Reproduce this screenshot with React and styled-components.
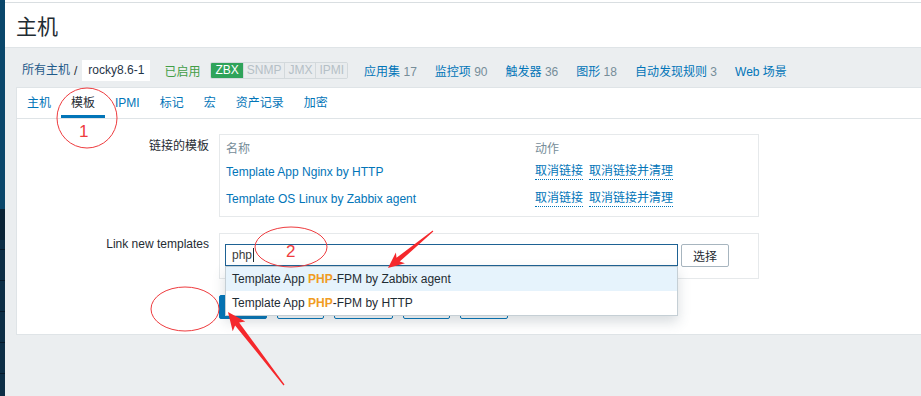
import React from "react";
import styled, { createGlobalStyle } from "styled-components";

const GlobalStyle = createGlobalStyle`
  html, body {
    margin: 0;
    padding: 0;
    background: #ffffff;
  }
  body {
    font-family: "Liberation Sans", Arial, "Noto Sans CJK SC", sans-serif;
    font-size: 12px;
    color: #1f2c33;
  }
  * {
    box-sizing: border-box;
  }
`;

const Page = styled.div`
  position: relative;
  display: flex;
  width: 921px;
  height: 396px;
  overflow: hidden;
`;

const Sidebar = styled.div`
  width: 5px;
  flex: none;
  background:
    repeating-linear-gradient(
      to bottom,
      transparent 0 30px,
      #06192a 30px 31px
    ) 0 219px / 100% 100% no-repeat,
    linear-gradient(
      to bottom,
      #0a476b 0 209px,
      #0a2335 209px 240px,
      #0c2e46 240px
    );
`;

const Main = styled.div`
  flex: 1;
  display: flex;
  flex-direction: column;
  background: linear-gradient(to bottom, #ffffff 0 2px, #ebeef0 2px);
`;

const Header = styled.header`
  margin-top: 2px;
  height: 46px;
  display: flex;
  align-items: center;
  padding-left: 11px;
  background: #ffffff;
  border-top: 1px solid #d9dee1;
  border-bottom: 1px solid #dfe4e7;
`;

const Title = styled.h1`
  margin: 0 0 1px;
  font-size: 21px;
  font-weight: normal;
  color: #1f2c33;
`;

const Crumbs = styled.nav`
  display: flex;
  align-items: center;
  height: 39px;
  padding: 12px 0 6px 17px;
`;

const CrumbLink = styled.span`
  color: #1f5a8a;
  line-height: 21px;
`;

const Separator = styled.span`
  margin: 0 5px 0 4px;
  color: #1f2c33;
`;

const HostBox = styled.span`
  display: inline-block;
  height: 21px;
  line-height: 21px;
  padding: 0 6px;
  background: #ffffff;
  color: #1f3448;
`;

const Status = styled.span`
  margin-left: 14px;
  color: #429e47;
`;

const Badges = styled.span`
  display: flex;
  margin-left: 10px;
  height: 17px;
  border-radius: 2px;
  overflow: hidden;
  border: 1px solid #d3d9dc;
`;

const Badge = styled.span`
  display: inline-block;
  line-height: 15px;
  background: ${(p) => (p.$on ? "#2fa35a" : "#e9ecee")};
  color: ${(p) => (p.$on ? "#ffffff" : "#b5c0c6")};
  border-left: ${(p) => (p.$first ? "none" : "1px solid #d3d9dc")};
  padding: ${(p) => (p.$on ? "0 4px" : "0 3px")};
`;

const HostLinks = styled.span`
  display: flex;
  gap: 18px;
  margin-left: 16px;
`;

const HostLink = styled.span`
  color: #0275b8;
`;

const Count = styled.span`
  color: #768d99;
`;

const Panel = styled.section`
  margin-left: 11px;
  background: #ffffff;
  border: 1px solid #dfe4e7;
  border-right: none;
`;

const Tabs = styled.ul`
  display: flex;
  margin: 0;
  padding: 0;
  list-style: none;
  height: 31px;
  border-bottom: 1px solid #dfe4e7;
`;

const Tab = styled.li`
  padding: 0 10px;
  height: 30px;
  line-height: 30px;
  color: ${(p) => (p.$active ? "#1f2c33" : "#0275b8")};
  box-shadow: ${(p) => (p.$active ? "inset 0 -3px 0 #0275b8" : "none")};
`;

const Form = styled.div`
  display: grid;
  grid-template-columns: 192px 540px;
  column-gap: 10px;
  row-gap: 16px;
  padding: 15px 0 15px 0;
`;

const Label = styled.label`
  text-align: right;
  line-height: 14px;
  padding-top: ${(p) => p.$top || 5}px;
  color: #1f2c33;
`;

const Box = styled.div`
  border: 1px solid #e6e9eb;
  background: #ffffff;
`;

const LinkedTable = styled(Box)`
  display: grid;
  grid-template-columns: 309px 1fr;
  grid-template-rows: 23px 27px 27px;
  padding: 0 6px 4px;
  align-items: center;
`;

const HeadCell = styled.span`
  color: #768d99;
  padding-top: 2px;
`;

const NameCell = styled.span`
  color: #0275b8;
`;

const Actions = styled.span`
  display: flex;
  gap: 6px;
`;

const DottedLink = styled.span`
  color: #0275b8;
  border-bottom: 1px dotted #0275b8;
  line-height: 15px;
`;

const SearchBox = styled(Box)`
  display: flex;
  align-items: flex-start;
  padding: 10px 5px 11px;
`;

const Multiselect = styled.div`
  position: relative;
  width: 453px;
  height: 22px;
  border: 1px solid #1e6294;
  padding-left: 6px;
  line-height: 20px;
  color: #3a3a3a;
`;

const Caret = styled.span`
  display: inline-block;
  width: 1px;
  height: 14px;
  margin-left: 1px;
  vertical-align: -3px;
  background: #1f2c33;
`;

const Suggest = styled.ul`
  position: absolute;
  z-index: 2;
  top: 21px;
  left: -1px;
  width: 453px;
  margin: 0;
  padding: 0;
  list-style: none;
  background: #ffffff;
  border: 1px solid #c5cfd5;
  box-shadow: 0 6px 12px rgba(60, 80, 95, 0.2);
`;

const SuggestItem = styled.li`
  height: 24px;
  line-height: 24px;
  padding-left: 6px;
  color: #1f2c33;
  background: ${(p) => (p.$hover ? "#e6f3fc" : "#ffffff")};
`;

const Match = styled.b`
  color: #f09c24;
`;

const SelectButton = styled.button`
  margin-left: 3px;
  width: 48px;
  height: 23px;
  padding: 0;
  font: inherit;
  color: #1f2c33;
  background: #ffffff;
  border: 1px solid #a7b5bf;
  border-radius: 2px;
`;

const ButtonRow = styled.div`
  grid-column: 2;
  display: flex;
  gap: 10px;
`;

/* the labels of these buttons sit under the suggestion list */
const ActionButton = styled.button`
  width: ${(p) => p.$w}px;
  height: 24px;
  padding: 0;
  font: inherit;
  border-radius: 2px;
  border: 1px solid #0275b8;
  background: ${(p) => (p.$primary ? "#0275b8" : "#ffffff")};
  color: ${(p) => (p.$primary ? "#ffffff" : "#0275b8")};
`;

const Annotations = styled.svg`
  position: absolute;
  inset: 0;
  z-index: 5;
  pointer-events: none;
`;

const tabs = ["主机", "模板", "IPMI", "标记", "宏", "资产记录", "加密"];

const hostLinks = [
  ["应用集", "17"],
  ["监控项", "90"],
  ["触发器", "36"],
  ["图形", "18"],
  ["自动发现规则", "3"],
  ["Web 场景", ""],
];

const linked = ["Template App Nginx by HTTP", "Template OS Linux by Zabbix agent"];

const buttons = [
  ["更新", 48, true],
  ["克隆", 47],
  ["全克隆", 59],
  ["删除", 47],
  ["取消", 48],
];

export default function App() {
  return (
    <>
      <GlobalStyle />
      <Page>
        <Sidebar />
        <Main>
          <Header>
            <Title>主机</Title>
          </Header>
          <Crumbs>
            <CrumbLink>所有主机</CrumbLink>
            <Separator>/</Separator>
            <HostBox>rocky8.6-1</HostBox>
            <Status>已启用</Status>
            <Badges>
              <Badge $on $first>ZBX</Badge>
              <Badge>SNMP</Badge>
              <Badge>JMX</Badge>
              <Badge>IPMI</Badge>
            </Badges>
            <HostLinks>
              {hostLinks.map(([name, count]) => (
                <HostLink key={name}>
                  {name}
                  {count && <Count> {count}</Count>}
                </HostLink>
              ))}
            </HostLinks>
          </Crumbs>
          <Panel>
            <Tabs>
              {tabs.map((t) => (
                <Tab key={t} $active={t === "模板"}>
                  {t}
                </Tab>
              ))}
            </Tabs>
            <Form>
              <Label>链接的模板</Label>
              <LinkedTable>
                <HeadCell>名称</HeadCell>
                <HeadCell>动作</HeadCell>
                {linked.map((name) => (
                  <React.Fragment key={name}>
                    <NameCell>{name}</NameCell>
                    <Actions>
                      <DottedLink>取消链接</DottedLink>
                      <DottedLink>取消链接并清理</DottedLink>
                    </Actions>
                  </React.Fragment>
                ))}
              </LinkedTable>

              <Label $top={4}>Link new templates</Label>
              <SearchBox>
                <Multiselect>
                  php
                  <Caret />
                  <Suggest>
                    <SuggestItem $hover>
                      Template App <Match>PHP</Match>-FPM by Zabbix agent
                    </SuggestItem>
                    <SuggestItem>
                      Template App <Match>PHP</Match>-FPM by HTTP
                    </SuggestItem>
                  </Suggest>
                </Multiselect>
                <SelectButton>选择</SelectButton>
              </SearchBox>

              <ButtonRow>
                {buttons.map(([label, w, primary]) => (
                  <ActionButton
                    key={label}
                    $w={w}
                    $primary={primary}
                    aria-label={label}
                  />
                ))}
              </ButtonRow>
            </Form>
          </Panel>
        </Main>

        <Annotations width="921" height="396" viewBox="0 0 921 396">
          <g fill="none" stroke="#ee3b3e" strokeWidth="1">
            <ellipse cx="87" cy="118" rx="30" ry="30" />
            <ellipse cx="291" cy="247" rx="36" ry="20" />
            <ellipse cx="185" cy="309" rx="34" ry="22" />
          </g>
          <g fill="#ee3b3e" fontFamily="Liberation Sans, Arial, sans-serif" fontSize="17">
            <text x="79" y="137">1</text>
            <text x="286" y="257">2</text>
          </g>
          <g fill="#f5282c">
            <polygon points="433.3,231.4 399.7,261.6 404.9,263.2 388,268 395.9,252.4 396.5,257.8 432.7,230.6" />
            <polygon points="284.5,384.6 239.1,322.4 245.3,321.4 228,312 232.7,331.2 235.1,325.4 283.5,385.4" />
          </g>
        </Annotations>
      </Page>
    </>
  );
}
